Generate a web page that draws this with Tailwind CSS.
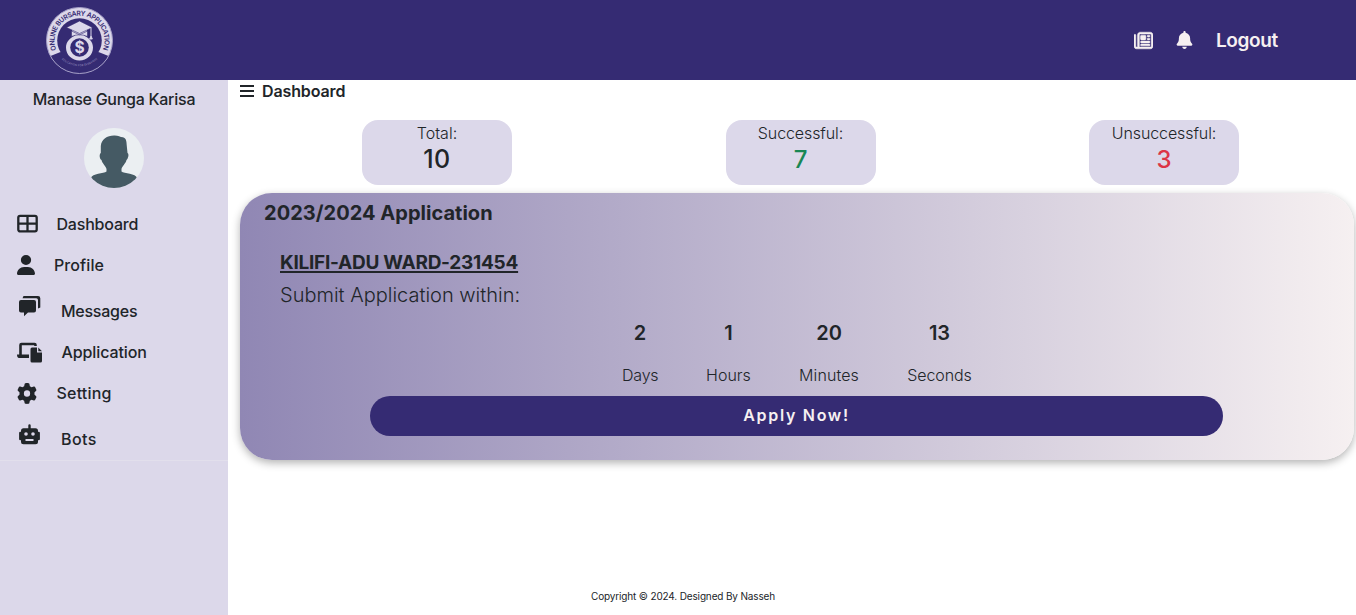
<!DOCTYPE html>
<html lang="en">
<head>
<meta charset="utf-8">
<title>Online Bursary Application</title>
<script src="https://cdn.jsdelivr.net/npm/@tailwindcss/browser@4"></script>
</head>
<body class="h-screen overflow-hidden bg-white text-[#212529] font-['Inter',sans-serif] text-base flex flex-col">
<header class="h-20 shrink-0 bg-[#352b73] text-[#f6f0f1] flex items-center justify-between pl-[45px] pr-[78px]">
  <svg class="size-[69px]" viewBox="0 0 69 69">
    <defs>
      <path id="arc" d="M11.300 43.900A25 25 0 1 1 57.700 43.900"/>
      <path id="low" d="M15.500 52A26 26 0 0 0 53.500 52"/>
    </defs>
    <circle cx="34.500" cy="34.500" r="33" fill="#dcd8ea"/>
    <circle cx="34.500" cy="34.500" r="22.300" fill="#352b73"/>
    <path d="M5.500 50L15.500 46Q34.500 62 53.500 46L63.500 50A32.500 32.500 0 0 1 5.500 50Z" fill="#352b73"/>
    <circle cx="34.500" cy="34.500" r="33" fill="none" stroke="#a49ec6" stroke-width="1"/>
    <path d="M30.500 29.500L27 27V23H42V27L38.500 29.500C44 31.500 48 36 48 41.500C48 49 42 54.500 34.500 54.500S21 49 21 41.500C21 36 25 31.500 30.500 29.500Z" fill="#dcd8ea"/>
    <circle cx="34.500" cy="41.500" r="9.300" fill="#352b73"/>
    <path d="M21.500 21.500L34.500 15L47.500 21.500L34.500 27.500ZM26.500 25L34.500 28.800L42.500 25V30.500Q34.500 27 26.500 30.500Z" fill="#dcd8ea" stroke="#352b73" stroke-width=".6"/>
    <path d="M46 22V30L44.700 33H47.300L46 30" fill="#dcd8ea" stroke="#dcd8ea"/>
    <text x="34.500" y="47.200" text-anchor="middle" font-size="15.500" font-weight="700" fill="#dcd8ea">$</text>
    <text font-size="6.800" font-weight="600" fill="#352b73"><textPath href="#arc" textLength="97">ONLINE BURSARY APPLICATION</textPath></text>
    <text font-size="2.600" fill="#a49ec6"><textPath href="#low" startOffset="2" textLength="39">EDUCATION FOR EVERYONE</textPath></text>
  </svg>
  <nav class="flex items-center">
    <svg class="w-[19px] h-[19px] mr-[23px]" viewBox="0 0 512 512" fill="currentColor" stroke="currentColor" stroke-width="14"><path d="M168 80c-13.300 0-24 10.700-24 24V408c0 8.400-1.400 16.500-4.100 24H440c13.300 0 24-10.700 24-24V104c0-13.300-10.700-24-24-24H168zM72 480c-39.800 0-72-32.200-72-72V112C0 98.700 10.700 88 24 88s24 10.700 24 24V408c0 13.300 10.700 24 24 24s24-10.700 24-24V104c0-39.800 32.200-72 72-72H440c39.800 0 72 32.200 72 72V408c0 39.800-32.200 72-72 72H72zM176 136c0-13.300 10.700-24 24-24h96c13.300 0 24 10.700 24 24v80c0 13.300-10.700 24-24 24H200c-13.300 0-24-10.700-24-24V136zm200-24h32a24 24 0 0 1 0 48H376a24 24 0 0 1 0-48zm0 80h32a24 24 0 0 1 0 48H376a24 24 0 0 1 0-48zM200 272H408a24 24 0 0 1 0 48H200a24 24 0 0 1 0-48zm0 80H408a24 24 0 0 1 0 48H200a24 24 0 0 1 0-48z"/></svg>
    <svg class="w-[17px] h-[18px] mr-[23px]" viewBox="0 0 448 512" fill="currentColor"><path d="M224 0c-17.700 0-32 14.300-32 32V51.200C119 66 64 130.600 64 208v18.800c0 47-17.300 92.400-48.500 127.600l-7.400 8.300c-8.400 9.400-10.400 22.900-5.300 34.400S19.400 416 32 416H416c12.600 0 24-7.400 29.200-18.900s3.100-25-5.300-34.400l-7.400-8.300C401.300 319.200 384 273.900 384 226.800V208c0-77.400-55-142-128-156.800V32c0-17.700-14.300-32-32-32zm45.300 493.300c12-12 18.700-28.300 18.700-45.300H160c0 17 6.700 33.300 18.700 45.300s28.300 18.700 45.300 18.700s33.300-6.700 45.300-18.700z"/></svg>
    <span class="text-[19px] leading-6 pt-[2px] font-semibold w-[62px] whitespace-nowrap tracking-[-0.4px]">Logout</span>
  </nav>
</header>
<div class="flex flex-1 min-h-0">
  <aside class="w-[228px] shrink-0 bg-[#dcd8ea] font-medium">
    <div class="h-[381px] border-b border-[#e2dfec] flex flex-col">
      <div class="h-12 pt-[7px] text-center leading-6 whitespace-nowrap tracking-[-0.26px]">Manase Gunga Karisa</div>
      <svg class="size-[60px] mx-auto" viewBox="0 0 60 60"><defs><clipPath id="av"><circle cx="30" cy="30" r="30"/></clipPath></defs><g clip-path="url(#av)"><rect width="60" height="60" fill="#ebeff2"/><path d="M30 7.500C34 7.300 36 9 39 9.300C42 10.500 42.500 12 42.800 18L43.500 25C45.500 26 44 31 42.500 32C41.500 36 38 38 37.500 41V43.500C40 46 52 45 53 50L48 60H12L7 50C8 45 20 46 22.500 43.500V41C22 38 18.500 36 17.500 32C15.500 31 15 26 16.800 25V18C17.500 11 23 7.800 30 7.500Z" fill="#455a64"/></g></svg>
      <nav class="mt-[15px] flex flex-col leading-6 whitespace-nowrap">
        <a class="flex items-center h-[41px] pl-[17px]"><svg class="w-[21px] h-[19px] mr-[18.500px]" viewBox="0 0 21 19"><rect x="1.300" y="1.800" width="18.400" height="15.600" rx="1.800" fill="none" stroke="currentColor" stroke-width="2.300"/><path d="M10.500 2V17M1 9.600H20" stroke="currentColor" stroke-width="2.300"/></svg><span class="tracking-[-0.2px]">Dashboard</span></a>
        <a class="flex items-center h-[41px] pl-[17px]"><svg class="w-[18px] h-5 mr-[19px]" preserveAspectRatio="none" viewBox="0 0 448 512" fill="currentColor"><path d="M224 256A128 128 0 1 0 224 0a128 128 0 1 0 0 256zm-45.700 48C79.800 304 0 383.800 0 482.300C0 498.700 13.300 512 29.700 512H418.300c16.400 0 29.700-13.300 29.700-29.700C448 383.800 368.200 304 269.700 304H178.300z"/></svg><span class="tracking-[0.1px]">Profile</span></a>
        <a class="flex items-start h-[47px] pl-[19px] pt-[11px]"><svg class="w-[22px] h-[21px] mr-[20px]" viewBox="0 0 22 21" fill="currentColor"><path d="M2 4H15Q17 4 17 6V14.500Q17 16.500 15 16.500H9L5 20.300V16.500H2Q0 16.500 0 14.500V6Q0 4 2 4Z"/><path d="M4.500 0H19Q21.300 0 21.300 2.300V11.500L19 12.500V4Q19 2.200 17.200 2.200H3.500Z"/></svg><span class="mt-[3px] tracking-[-0.25px]">Messages</span></a>
        <a class="flex items-center h-[40px] pl-[17px]"><svg class="w-[26px] h-[21px] mr-[18.500px]" viewBox="0 0 26 21" fill="currentColor"><path d="M2.200 14V3Q2.200.700 4.500.700H17.500Q19.800.700 19.800 3V4H17.200V3.200H4.800V12.600H12V16H2Q0 16 0 12.600H3Z"/><path d="M15 5.500H20V10.500H25V19Q25 20.500 23.500 20.500H15Q13.500 20.500 13.500 19V7Q13.500 5.500 15 5.500ZM21.300 5.500L25 9.200H21.300Z"/></svg><span class="tracking-[-0.1px]">Application</span></a>
        <a class="flex items-center h-[42px] pl-[17px]"><svg class="w-[20px] h-[21px] mr-[19.500px]" viewBox="0 0 512 512" preserveAspectRatio="none" fill="currentColor"><path d="M495.900 166.600c3.200 8.700 .5 18.400-6.400 24.600l-43.300 39.400c1.100 8.300 1.700 16.800 1.700 25.400s-.6 17.100-1.700 25.400l43.300 39.400c6.900 6.200 9.600 15.900 6.400 24.600c-4.400 11.900-9.700 23.300-15.800 34.300l-4.700 8.100c-6.600 11-14 21.400-22.100 31.200c-5.900 7.200-15.700 9.600-24.500 6.800l-55.700-17.700c-13.400 10.300-28.200 18.900-44 25.400l-12.500 57.100c-2 9.100-9 16.300-18.200 17.800c-13.800 2.300-28 3.500-42.500 3.500s-28.700-1.200-42.500-3.500c-9.200-1.500-16.200-8.700-18.200-17.800l-12.500-57.100c-15.800-6.500-30.600-15.100-44-25.400L83.100 425.900c-8.800 2.800-18.600 .3-24.500-6.800c-8.100-9.800-15.500-20.200-22.100-31.200l-4.700-8.100c-6.100-11-11.400-22.400-15.800-34.300c-3.200-8.700-.5-18.400 6.400-24.600l43.300-39.400C64.600 273.100 64 264.600 64 256s.6-17.100 1.700-25.400L22.400 191.200c-6.900-6.200-9.600-15.900-6.400-24.600c4.400-11.900 9.700-23.300 15.800-34.300l4.700-8.100c6.600-11 14-21.400 22.100-31.200c5.900-7.200 15.700-9.600 24.500-6.800l55.700 17.700c13.400-10.300 28.200-18.900 44-25.400l12.500-57.100c2-9.100 9-16.300 18.200-17.800C227.300 1.200 241.500 0 256 0s28.700 1.200 42.500 3.500c9.200 1.500 16.200 8.700 18.200 17.800l12.500 57.100c15.800 6.500 30.600 15.100 44 25.400l55.700-17.700c8.800-2.800 18.600-.3 24.500 6.800c8.100 9.800 15.500 20.200 22.100 31.200l4.700 8.100c6.100 11 11.400 22.400 15.800 34.300zM256 336a80 80 0 1 0 0-160 80 80 0 1 0 0 160z"/></svg><span class="tracking-[0.2px]">Setting</span></a>
        <a class="flex items-start h-[45px] pl-[19px] pt-[10px]"><svg class="w-[21px] h-[21px] mr-[21px]" viewBox="0 0 21 21"><path d="M10.500 1.500V5M1.300 9V15M19.700 9V15" stroke="currentColor" stroke-width="2.400" stroke-linecap="round"/><rect x="2" y="4.300" width="17" height="16" rx="2.500" fill="currentColor"/><circle cx="7" cy="10" r="1.800" fill="#dcd8ea"/><circle cx="14" cy="10" r="1.800" fill="#dcd8ea"/><path d="M6.500 16H14.500" stroke="#dcd8ea" stroke-width="2"/></svg><span class="mt-[3px] tracking-[0.4px]">Bots</span></a>
      </nav>
    </div>
  </aside>
  <main class="flex-1 min-w-0 flex flex-col pl-3">
    <div class="h-10 flex items-start whitespace-nowrap"><svg class="w-[14px] h-[14px] mr-2 mt-[4px]" viewBox="0 0 14 14"><path d="M0 2H14M0 7H14M0 12H14" stroke="currentColor" stroke-width="2"/></svg><span class="font-semibold leading-[22px] tracking-[-0.12px]">Dashboard</span></div>
    <section class="flex justify-between pl-[122px] pr-[117px] h-[73px] text-center">
      <div class="w-[150px] h-[65px] rounded-2xl bg-[#dcd8ea] pt-px"><div class="leading-6 font-light">Total:</div><div class="text-[25px] leading-[29px] font-medium tracking-[0.5px]">10</div></div>
      <div class="w-[150px] h-[65px] rounded-2xl bg-[#dcd8ea] pt-px"><div class="leading-6 font-light tracking-[-0.1px]">Successful:</div><div class="text-2xl leading-[29px] font-medium text-[#198754]">7</div></div>
      <div class="w-[150px] h-[65px] rounded-2xl bg-[#dcd8ea] pt-px"><div class="leading-6 font-light tracking-[-0.1px]">Unsuccessful:</div><div class="text-2xl leading-[29px] font-medium text-[#dc3545]">3</div></div>
    </section>
    <section class="w-[1114px] h-[267px] rounded-[32px] bg-linear-to-r/srgb from-[#9087b4] to-[#f6f0f1] shadow-[0_3px_8px_rgba(0,0,0,0.3)] whitespace-nowrap flex flex-col">
      <h2 class="pl-6 pt-2 h-[57px] text-xl leading-6 font-bold tracking-[0.03px]">2023/2024 Application</h2>
      <div class="pl-10 h-[36px] text-[19px] leading-[26px] font-bold tracking-[-0.25px]"><span class="underline decoration-[1.500px] underline-offset-2">KILIFI-ADU WARD-231454</span></div>
      <div class="pl-10 h-[30px] text-xl leading-[18px] font-light tracking-[0px]">Submit Application within:</div>
      <div class="flex justify-center gap-12 h-[80px] text-center pr-0">
        <div class="w-[36px]"><div class="text-xl leading-[34px] font-semibold">2</div><div class="mt-[13px] leading-6 font-light tracking-[-0.2px]">Days</div></div>
        <div class="w-[45px]"><div class="text-xl leading-[34px] font-semibold">1</div><div class="mt-[13px] leading-6 font-light tracking-[0px]">Hours</div></div>
        <div class="w-[60px]"><div class="text-xl leading-[34px] font-semibold">20</div><div class="mt-[13px] leading-6 font-light tracking-[0.1px]">Minutes</div></div>
        <div class="w-[65px]"><div class="text-xl leading-[34px] font-semibold">13</div><div class="mt-[13px] leading-6 font-light tracking-[-0.1px]">Seconds</div></div>
      </div>
      <button class="w-[853px] h-10 ml-[130px] rounded-full bg-[#352b73] text-[#f6f0f1] font-semibold tracking-[1.700px] leading-6 pb-[2px]">Apply Now!</button>
    </section>
    <footer class="mt-auto h-[27px] pl-[351px] text-[10px] leading-4 tracking-[-0.15px] whitespace-nowrap">Copyright © 2024. Designed By Nasseh</footer>
  </main>
</div>
</body>
</html>
